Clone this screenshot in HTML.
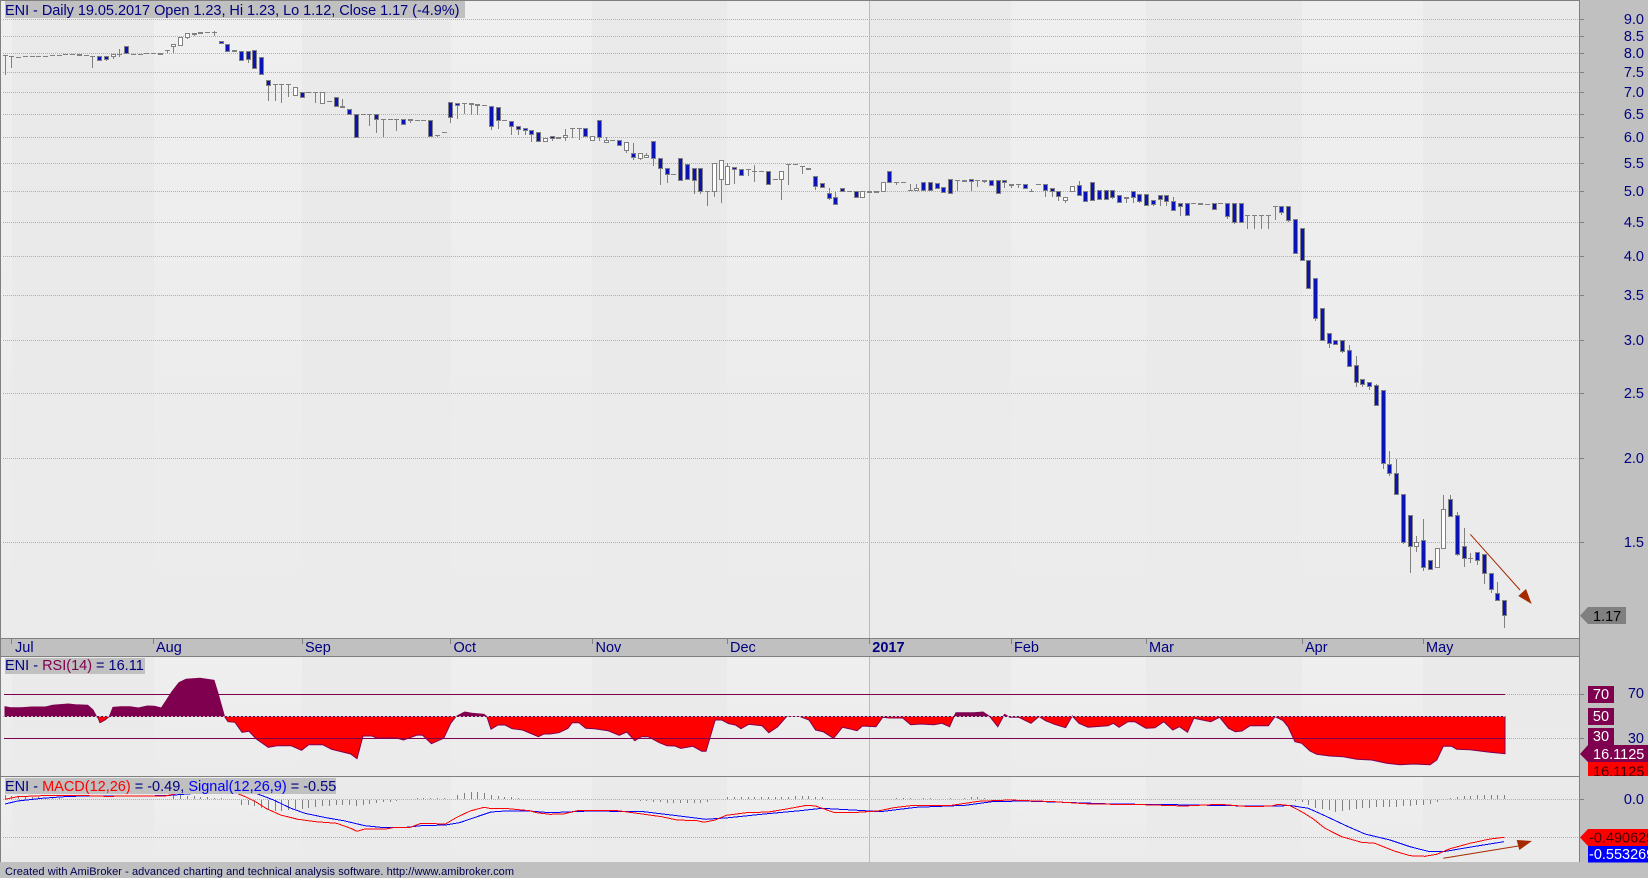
<!DOCTYPE html>
<html><head><meta charset="utf-8"><title>ENI - Daily</title>
<style>
html,body{margin:0;padding:0;background:#c0c0c0;overflow:hidden}
svg{display:block}
text{font-family:"Liberation Sans",Arial,sans-serif;font-size:14.5px;fill:#000080}
.r{text-anchor:end}
</style></head><body>
<svg xmlns="http://www.w3.org/2000/svg" width="1648" height="878" viewBox="0 0 1648 878">
<defs>
<linearGradient id="g" x1="0" y1="0" x2="0" y2="1"><stop offset="0" stop-color="#efefef"/><stop offset="1" stop-color="#ebebeb"/></linearGradient>
<linearGradient id="d" x1="0" y1="0" x2="0" y2="1"><stop offset="0" stop-color="#eaeaea"/><stop offset="1" stop-color="#ebebeb"/></linearGradient>
<clipPath id="above"><rect x="0" y="650" width="1580" height="66.5"/></clipPath>
<clipPath id="below"><rect x="0" y="716.5" width="1580" height="60"/></clipPath>
<clipPath id="redbox"><rect x="1588" y="762" width="60" height="14"/></clipPath>
<clipPath id="pane"><rect x="1" y="777" width="1578" height="85"/></clipPath>
<path id="rsi" d="M5 716.5V706.7L10.5 707.7 21 707.7 31.6 707 45.6 707 52.6 705.3 68.4 704 75.4 704.7 87.7 705.3 93 710 96.5 716.5 98 717.7 100 722.7 105 720 109.4 716.5 113 707.3 121 706.7 130 706.7 138.5 708 147.3 706 154.3 706.3 161.3 708 166.6 700 172 691.7 179 682.7 186 679.3 200 678.3 214 680.3 218 693.3 224.5 716.5 228 721.7 235 722.3 242 732.3 249 731.3 256 738.7 268.3 747.3 277 745.7 291 745.7 301.6 750.3 308.7 744.7 322.7 744.7 331.5 749.3 350.7 754 357 758.7 363 736 371.8 736 377 738 396.4 738 403.5 740 417.4 735 422.6 735.3 431.4 743.7 443.7 738.3 450.7 723.3 456 716.5 464.7 712 471.8 713.3 484 714.3 486.8 716.5 491 729.3 498 725 505 725 512 728.7 522.6 730 538.4 736.7 543.7 734 550 734 559 732.7 567.9 728.3 572.3 722.7 579 722.7 585.7 728.3 594.6 728.7 608 730.7 619.2 735.3 626.8 732 634.8 740.7 641.5 736.7 648.2 736.7 659.4 742.7 667 745.7 675 746 680.8 748.3 692.9 746.3 701.8 751.3 706 751.3 715.2 720 721.9 720 728.6 723.7 735.3 725 741 728.7 748.7 724.3 762 725.7 768.8 732.7 777.7 726.7 786.6 716.5 800 716.5 809 720 815.6 730 823.2 731.7 833.5 738.3 842.4 727.3 849 728.7 857 730.7 862.5 726 875.9 726.7 882.6 717.3 889.3 718 902.7 718 910.7 724.7 920.5 724 933.9 724.7 942 723.3 949.6 726.7 954 716.5 956 712.7 974 712.7 983 712 989.7 716.5 997.8 726.7 1004.5 714.3 1009.8 717.3 1018.8 717.3 1031 723.3 1039 716.5 1045.5 720.7 1054.5 724.3 1065.6 727.7 1072.3 716 1079 723.3 1088 727.3 1108 725.7 1113.4 723.3 1119 727.3 1128 721.7 1134.8 721.7 1146 728.3 1154.9 727.7 1163.8 721.7 1172.8 730 1179.5 726.7 1187.5 732.3 1193.8 718.3 1210.7 721.7 1219.6 717.3 1228.6 728.3 1235.3 731.7 1242 731 1250 725.7 1268.3 725.7 1275 716.5 1283 720.5 1288 726.7 1295 741.7 1301.7 743.3 1310 751 1316.7 754.3 1330 756 1343.3 756.7 1356.7 759.3 1371.7 760 1386.7 763.3 1400 764.7 1413.3 764 1430 764.7 1436.7 760 1443.3 746.3 1451.7 746.3 1456.7 749.3 1470 749.7 1490 752.3 1505 753.7V716.5Z"/>
</defs>

<!-- base -->
<rect width="1648" height="878" fill="#c0c0c0"/>

<!-- top pane bands -->
<g>
<rect x="1" y="1" width="11" height="637" fill="url(#g)"/>
<rect x="12" y="1" width="142" height="637" fill="url(#d)"/>
<rect x="154" y="1" width="148" height="637" fill="url(#g)"/>
<rect x="302" y="1" width="149" height="637" fill="url(#d)"/>
<rect x="451" y="1" width="141" height="637" fill="url(#g)"/>
<rect x="592" y="1" width="135" height="637" fill="url(#d)"/>
<rect x="727" y="1" width="142" height="637" fill="url(#g)"/>
<rect x="869" y="1" width="142" height="637" fill="url(#d)"/>
<rect x="1011" y="1" width="135" height="637" fill="url(#g)"/>
<rect x="1146" y="1" width="156" height="637" fill="url(#d)"/>
<rect x="1302" y="1" width="121" height="637" fill="url(#g)"/>
<rect x="1423" y="1" width="156" height="637" fill="url(#d)"/>
</g>
<!-- RSI pane bands -->
<g>
<rect x="1" y="657" width="11" height="119" fill="url(#g)"/>
<rect x="12" y="657" width="142" height="119" fill="url(#d)"/>
<rect x="154" y="657" width="148" height="119" fill="url(#g)"/>
<rect x="302" y="657" width="149" height="119" fill="url(#d)"/>
<rect x="451" y="657" width="141" height="119" fill="url(#g)"/>
<rect x="592" y="657" width="135" height="119" fill="url(#d)"/>
<rect x="727" y="657" width="142" height="119" fill="url(#g)"/>
<rect x="869" y="657" width="142" height="119" fill="url(#d)"/>
<rect x="1011" y="657" width="135" height="119" fill="url(#g)"/>
<rect x="1146" y="657" width="156" height="119" fill="url(#d)"/>
<rect x="1302" y="657" width="121" height="119" fill="url(#g)"/>
<rect x="1423" y="657" width="156" height="119" fill="url(#d)"/>
</g>
<!-- MACD pane bands -->
<g>
<rect x="1" y="777" width="11" height="85" fill="url(#g)"/>
<rect x="12" y="777" width="142" height="85" fill="url(#d)"/>
<rect x="154" y="777" width="148" height="85" fill="url(#g)"/>
<rect x="302" y="777" width="149" height="85" fill="url(#d)"/>
<rect x="451" y="777" width="141" height="85" fill="url(#g)"/>
<rect x="592" y="777" width="135" height="85" fill="url(#d)"/>
<rect x="727" y="777" width="142" height="85" fill="url(#g)"/>
<rect x="869" y="777" width="142" height="85" fill="url(#d)"/>
<rect x="1011" y="777" width="135" height="85" fill="url(#g)"/>
<rect x="1146" y="777" width="156" height="85" fill="url(#d)"/>
<rect x="1302" y="777" width="121" height="85" fill="url(#g)"/>
<rect x="1423" y="777" width="156" height="85" fill="url(#d)"/>
</g>

<!-- grid -->
<path fill="none" stroke="#b0b0b0" stroke-dasharray="1 1" shape-rendering="crispEdges" d="M3 19.5H1580M3 36.5H1580M3 53.5H1580M3 72.5H1580M3 92.5H1580M3 114.5H1580M3 137.5H1580M3 163.5H1580M3 191.5H1580M3 222.5H1580M3 256.5H1580M3 295.5H1580M3 340.5H1580M3 393.5H1580M3 458.5H1580M3 542.5H1580M1505 694.5H1580M1505 738.5H1580M3 799.5H1580M3 837.5H1580"/>
<path fill="none" stroke="#808080" shape-rendering="crispEdges" d="M1580 19.5h4M1580 36.5h4M1580 53.5h4M1580 72.5h4M1580 92.5h4M1580 114.5h4M1580 137.5h4M1580 163.5h4M1580 191.5h4M1580 222.5h4M1580 256.5h4M1580 295.5h4M1580 340.5h4M1580 393.5h4M1580 458.5h4M1580 542.5h4M1580 694.5h4M1580 738.5h4M1580 799.5h4"/>
<!-- year line -->
<path d="M869.5 0V862" stroke="#bbbbbb" shape-rendering="crispEdges"/>

<!-- candles -->
<path fill="none" stroke="#808080" shape-rendering="crispEdges" d="M5.5 55V75M11.5 56V68M92.5 56V68M106.5 59V61M113.5 56V59M119.5 49V57M167.5 50V53M173.5 46V53M187.5 37V39M194.5 34V36M214.5 31V36M248.5 59V63M268.5 85V101M275.5 84V101M281.5 84V103M288.5 84V97M315.5 92V103M342.5 99V108M369.5 114V126M376.5 119V133M383.5 119V137M396.5 119V131M410.5 120V123M437.5 135V137M450.5 117V123M457.5 105V119M464.5 103V114M471.5 104V115M477.5 105V115M491.5 126V130M498.5 120V129M511.5 126V135M518.5 129V135M525.5 130V135M531.5 134V142M552.5 138V141M565.5 129V141M572.5 128V138M579.5 128V140M599.5 137V141M606.5 137V141M626.5 150V153M633.5 143V160M640.5 158V160M646.5 153V156M653.5 158V166M660.5 168V185M667.5 174V183M694.5 180V194M700.5 191V194M707.5 191V206M714.5 191V197M721.5 179V203M727.5 163V167M734.5 169V184M748.5 169V176M754.5 165V182M781.5 179V200M788.5 164V185M802.5 166V174M815.5 186V190M822.5 187V188M829.5 188V200M835.5 192V198M896.5 182V185M910.5 184V191M916.5 184V189M957.5 180V191M971.5 181V191M977.5 180V187M984.5 181V183M1004.5 182V188M1011.5 185V188M1018.5 184V188M1031.5 189V192M1045.5 190V197M1052.5 191V197M1058.5 196V201M1065.5 200V203M1079.5 181V186M1112.5 197V199M1126.5 198V203M1133.5 197V203M1139.5 201V203M1153.5 204V206M1160.5 199V206M1166.5 201V206M1173.5 197V202M1180.5 206V216M1227.5 216V219M1234.5 222V224M1241.5 222V223M1247.5 215V229M1254.5 215V229M1261.5 215V229M1268.5 215V229M1275.5 206V220M1281.5 212V215M1288.5 220V222M1315.5 318V321M1329.5 343V348M1342.5 351V353M1349.5 345V351M1356.5 356V387M1362.5 384V387M1369.5 386V390M1376.5 384V386M1383.5 463V469M1389.5 451V476M1396.5 459V474M1403.5 542V544M1410.5 546V573M1416.5 536V552M1423.5 519V571M1437.5 567V568M1443.5 495V510M1450.5 495V500M1457.5 512V556M1464.5 528V567M1470.5 553V563M1477.5 560V565M1484.5 573V584M1491.5 589V593M1497.5 582V594M1504.5 615V628M3 55.5h5M9 56.5h5M16 57.5h5M23 56.5h5M30 56.5h5M36 56.5h5M43 56.5h5M50 55.5h5M57 55.5h5M63 54.5h5M70 54.5h5M84 55.5h5M90 56.5h5M117 54.5h5M131 54.5h5M138 54.5h5M144 53.5h5M151 53.5h5M165 50.5h5M205 32.5h5M212 32.5h5M273 84.5h5M279 84.5h5M286 84.5h5M306 92.5h5M313 92.5h5M327 101.5h5M361 114.5h5M367 114.5h5M381 119.5h5M388 119.5h5M394 119.5h5M415 120.5h5M421 120.5h5M435 135.5h5M442 132.5h5M462 103.5h5M482 105.5h5M502 120.5h5M570 128.5h5M577 128.5h5M610 140.5h5M671 174.5h5M705 191.5h5M746 169.5h5M752 171.5h5M759 171.5h5M773 179.5h5M786 164.5h5M793 164.5h5M800 166.5h5M847 191.5h5M894 182.5h5M901 182.5h5M908 190.5h5M955 180.5h5M975 180.5h5M1016 184.5h5M1029 191.5h5M1036 184.5h5M1191 203.5h5M1205 204.5h5M1218 203.5h5M1245 215.5h5M1252 215.5h5M1259 215.5h5M1266 215.5h5M1273 206.5h5M1468 558.5h5"/>
<path fill="#808080" shape-rendering="crispEdges" d="M77 54h5v2h-5zM158 53h5v2h-5zM192 33h5v2h-5zM198 32h5v2h-5zM232 50h5v2h-5zM340 106h5v2h-5zM408 119h5v2h-5zM469 103h5v2h-5zM475 104h5v2h-5zM556 137h5v2h-5zM806 168h5v2h-5zM867 191h5v2h-5zM874 191h5v2h-5zM962 180h5v2h-5zM982 180h5v2h-5zM1009 184h5v2h-5zM1124 197h5v2h-5zM1198 203h5v2h-5z"/>
<path fill="#0a14b4" stroke="#808080" shape-rendering="crispEdges" d="M97.5 56.5h4v4h-4zM104.5 56.5h4v3h-4zM124.5 46.5h4v7h-4zM219.5 41.5h4v2h-4zM225.5 44.5h4v7h-4zM239.5 51.5h4v9h-4zM246.5 51.5h4v8h-4zM252.5 50.5h4v18h-4zM259.5 57.5h4v17h-4zM266.5 80.5h4v5h-4zM300.5 92.5h4v5h-4zM334.5 97.5h4v9h-4zM347.5 109.5h4v5h-4zM354.5 114.5h4v23h-4zM374.5 114.5h4v5h-4zM401.5 119.5h4v5h-4zM428.5 120.5h4v16h-4zM448.5 102.5h4v15h-4zM455.5 103.5h4v2h-4zM489.5 106.5h4v20h-4zM496.5 107.5h4v13h-4zM509.5 121.5h4v5h-4zM516.5 126.5h4v3h-4zM523.5 128.5h4v2h-4zM529.5 130.5h4v4h-4zM536.5 132.5h4v9h-4zM550.5 136.5h4v2h-4zM583.5 128.5h4v8h-4zM597.5 120.5h4v17h-4zM617.5 140.5h4v5h-4zM631.5 153.5h4v4h-4zM651.5 141.5h4v17h-4zM658.5 158.5h4v10h-4zM665.5 168.5h4v6h-4zM678.5 158.5h4v22h-4zM685.5 164.5h4v15h-4zM692.5 168.5h4v12h-4zM698.5 168.5h4v23h-4zM732.5 167.5h4v2h-4zM739.5 169.5h4v6h-4zM766.5 171.5h4v13h-4zM813.5 176.5h4v10h-4zM820.5 183.5h4v4h-4zM827.5 193.5h4v5h-4zM833.5 197.5h4v7h-4zM840.5 188.5h4v3h-4zM854.5 191.5h4v6h-4zM887.5 171.5h4v11h-4zM921.5 182.5h4v8h-4zM928.5 182.5h4v8h-4zM935.5 183.5h4v5h-4zM941.5 187.5h4v5h-4zM948.5 179.5h4v14h-4zM969.5 179.5h4v2h-4zM989.5 180.5h4v5h-4zM996.5 180.5h4v13h-4zM1002.5 180.5h4v2h-4zM1023.5 184.5h4v4h-4zM1043.5 184.5h4v6h-4zM1050.5 188.5h4v3h-4zM1056.5 191.5h4v5h-4zM1077.5 185.5h4v10h-4zM1083.5 191.5h4v10h-4zM1090.5 182.5h4v18h-4zM1097.5 190.5h4v9h-4zM1104.5 190.5h4v9h-4zM1110.5 190.5h4v7h-4zM1117.5 195.5h4v7h-4zM1131.5 191.5h4v6h-4zM1137.5 194.5h4v7h-4zM1144.5 194.5h4v11h-4zM1151.5 200.5h4v4h-4zM1158.5 195.5h4v4h-4zM1164.5 195.5h4v6h-4zM1171.5 201.5h4v9h-4zM1178.5 203.5h4v3h-4zM1185.5 203.5h4v12h-4zM1212.5 203.5h4v6h-4zM1225.5 203.5h4v13h-4zM1232.5 203.5h4v19h-4zM1239.5 203.5h4v19h-4zM1279.5 206.5h4v6h-4zM1286.5 206.5h4v14h-4zM1293.5 219.5h4v34h-4zM1300.5 228.5h4v32h-4zM1306.5 260.5h4v28h-4zM1313.5 278.5h4v40h-4zM1320.5 308.5h4v32h-4zM1327.5 333.5h4v10h-4zM1333.5 340.5h4v4h-4zM1340.5 340.5h4v11h-4zM1347.5 350.5h4v16h-4zM1354.5 365.5h4v17h-4zM1360.5 379.5h4v5h-4zM1367.5 382.5h4v4h-4zM1374.5 385.5h4v20h-4zM1381.5 390.5h4v73h-4zM1387.5 464.5h4v9h-4zM1394.5 473.5h4v21h-4zM1401.5 494.5h4v48h-4zM1408.5 515.5h4v31h-4zM1421.5 540.5h4v27h-4zM1428.5 560.5h4v9h-4zM1448.5 499.5h4v17h-4zM1455.5 515.5h4v39h-4zM1462.5 546.5h4v12h-4zM1475.5 552.5h4v8h-4zM1482.5 554.5h4v19h-4zM1489.5 573.5h4v16h-4zM1495.5 593.5h4v7h-4zM1502.5 600.5h4v15h-4z"/>
<path fill="#ffffff" stroke="#808080" shape-rendering="crispEdges" d="M111.5 54.5h4v2h-4zM171.5 44.5h4v2h-4zM178.5 37.5h4v8h-4zM185.5 33.5h4v4h-4zM293.5 87.5h4v8h-4zM320.5 92.5h4v11h-4zM543.5 138.5h4v3h-4zM563.5 135.5h4v2h-4zM590.5 136.5h4v4h-4zM604.5 140.5h4v2h-4zM624.5 142.5h4v8h-4zM638.5 153.5h4v5h-4zM644.5 155.5h4v2h-4zM712.5 163.5h4v28h-4zM719.5 160.5h4v19h-4zM725.5 166.5h4v18h-4zM779.5 171.5h4v8h-4zM860.5 191.5h4v6h-4zM881.5 182.5h4v9h-4zM914.5 188.5h4v2h-4zM1063.5 197.5h4v3h-4zM1070.5 186.5h4v5h-4zM1414.5 542.5h4v4h-4zM1435.5 548.5h4v19h-4zM1441.5 509.5h4v39h-4z"/>

<!-- price arrow -->
<path d="M1470.3 534.3L1520 590" stroke="#a52a00" fill="none"/>
<path d="M1531.7 604L1518.3 596 1526 589Z" fill="#a52a00"/>

<!-- RSI -->
<use href="#rsi" fill="#800050" clip-path="url(#above)"/>
<use href="#rsi" fill="#ff0000" clip-path="url(#below)"/>
<use href="#rsi" fill="none" stroke="#800050" stroke-width="1"/>
<path d="M3 716.5H1505" stroke="#b4b4b4" stroke-dasharray="2 2" shape-rendering="crispEdges"/>
<path d="M4 694.5H1505M4 738.5H1505" stroke="#800050" shape-rendering="crispEdges"/>

<!-- MACD histogram -->
<path fill="none" stroke="#808080" shape-rendering="crispEdges" d="M5.5 799V795M11.5 799V796M18.5 799V796M25.5 799V796M32.5 799V797M38.5 799V797M45.5 799V798M52.5 799V798M59.5 799V798M173.5 799V795M180.5 799V795M187.5 799V796M194.5 799V796M200.5 799V797M207.5 799V797M214.5 799V798M221.5 799V798M241.5 800V805M248.5 800V805M254.5 800V806M261.5 800V808M268.5 800V810M275.5 800V811M281.5 800V811M288.5 800V810M295.5 800V809M302.5 800V809M308.5 800V808M315.5 800V807M322.5 800V806M329.5 800V806M336.5 800V805M342.5 800V805M349.5 800V805M356.5 800V806M363.5 800V805M369.5 800V804M376.5 800V803M383.5 800V802M390.5 800V802M396.5 800V801M417.5 799V798M423.5 799V798M430.5 799V798M437.5 799V798M444.5 799V798M457.5 799V795M464.5 799V793M471.5 799V792M477.5 799V792M484.5 799V793M491.5 799V795M498.5 799V796M504.5 799V797M511.5 799V797M518.5 799V798M640.5 800V801M646.5 800V801M653.5 800V802M660.5 800V802M667.5 800V803M673.5 800V803M680.5 800V803M687.5 800V803M694.5 800V803M700.5 800V803M707.5 800V802M727.5 799V797M734.5 799V797M741.5 799V797M748.5 799V797M754.5 799V797M761.5 799V797M768.5 799V797M775.5 799V797M781.5 799V797M788.5 799V797M795.5 799V796M802.5 799V796M808.5 799V796M815.5 799V797M822.5 799V797M896.5 799V798M903.5 799V798M910.5 799V798M923.5 799V798M930.5 799V798M950.5 799V798M964.5 799V798M971.5 799V797M977.5 799V797M984.5 799V798M1295.5 800V801M1302.5 800V802M1308.5 800V805M1315.5 800V808M1322.5 800V809M1329.5 800V810M1335.5 800V812M1342.5 800V811M1349.5 800V810M1356.5 800V809M1362.5 800V808M1369.5 800V808M1376.5 800V807M1383.5 800V807M1389.5 800V807M1396.5 800V807M1403.5 800V806M1410.5 800V806M1416.5 800V805M1423.5 800V805M1430.5 800V804M1437.5 800V802M1450.5 799V798M1457.5 799V797M1464.5 799V796M1470.5 799V796M1477.5 799V795M1484.5 799V795M1491.5 799V795M1497.5 799V795M1504.5 799V795"/>

<!-- MACD lines -->
<g clip-path="url(#pane)" fill="none" shape-rendering="crispEdges" stroke-width="1">
<polyline stroke="#0000ff" points="5,804 17.5,801 42,798.3 70,796.3 108.7,796 165,795.7 191,793.7 205,788 225,786 240,788 257.8,794 273.6,800 291,808.3 305,813.3 326,817.7 343.7,820.7 364.8,825.7 380.6,827.3 406.9,827.3 420.9,825.7 445.5,825 459.5,822.7 477,816.7 491,812 505,811 529.6,811 550,812.7 590,811 643.8,811.7 679.5,816 706,819.3 728.6,817.7 764.3,814 800,810.7 822,808.3 858,810.3 880.4,811.7 916,807.3 965.2,805.3 992,801.7 1023,801 1063.4,802.3 1112.5,804 1175,804.7 1250,806 1291.7,805.7 1308.3,808.3 1323.3,815 1346.7,826 1365,834 1390,840 1410,846.7 1428.3,851.3 1443.3,851.7 1463.3,848.3 1483.3,845 1504,841.7"/>
<polyline stroke="#ff0000" points="5,799.3 17.5,796.7 42,795.7 87.7,795.7 105,796.3 165,796 175,794 195,784 215,782 230,788 238.5,794 245.5,796.7 256,802 266.6,808.7 280.6,815 298,819.3 315.7,821.7 336.7,823.3 350.7,828.3 357,831.3 364.8,829 385.8,829 392.8,827.7 410.4,827.3 420.9,823.3 445.5,824 456,817.7 470,811 484,807.3 489.3,808.3 508.6,808.7 529.6,810.7 536.6,812.7 550,814.3 563.4,814 579,810.3 614.7,810.3 637,813.3 661.6,816.7 677,820 697.3,820.7 704,822.3 715.2,820 726.3,815.3 746.4,812.7 768.8,812 786.6,809 806.7,805.3 815.6,806 833.5,812.3 858,812.3 878,811 893.8,807.7 913.8,805.3 951.8,805.3 978.6,801.3 1009.8,800 1054.5,801.7 1090.2,804 1143.8,804.7 1184,806 1219.6,804.3 1250,806.7 1271.7,806 1278.3,804.3 1290,805.7 1301.7,811.7 1313.3,819 1325,828.3 1341.7,836.7 1361.7,842.3 1375,843.3 1393.3,850.7 1410,855.7 1425,856.3 1436.7,854.3 1450,848.7 1470,843.3 1490,839 1504.3,837.3"/>
</g>
<!-- MACD arrow -->
<path d="M1443.3 858.3L1518.3 846" stroke="#a52a00" fill="none"/>
<path d="M1532 841L1516.7 840 1519.3 850Z" fill="#a52a00"/>

<!-- frames -->
<rect x="0" y="0" width="1" height="862" fill="#808080"/>
<rect x="0" y="0" width="1580" height="1" fill="#808080"/>
<rect x="1579" y="0" width="1" height="862" fill="#808080"/>
<rect x="1" y="638" width="1578" height="19" fill="#c0c0c0"/>
<rect x="0" y="638" width="1580" height="1" fill="#808080"/>
<rect x="0" y="656" width="1580" height="1" fill="#808080"/>
<rect x="0" y="776" width="1580" height="1" fill="#808080"/>
<rect x="0" y="862" width="1580" height="16" fill="#c0c0c0"/>

<!-- x axis ticks and labels -->
<path stroke="#808080" shape-rendering="crispEdges" d="M11.5 639v5M153.5 639v5M302.5 639v5M450.5 639v5M592.5 639v5M727.5 639v5M869.5 639v5M1011.5 639v5M1146.5 639v5M1302.5 639v5M1423.5 639v5"/>
<text x="15" y="652">Jul</text>
<text x="156" y="652">Aug</text>
<text x="305" y="652">Sep</text>
<text x="453.5" y="652">Oct</text>
<text x="595.5" y="652">Nov</text>
<text x="730" y="652">Dec</text>
<text x="872.3" y="652" style="font-weight:bold">2017</text>
<text x="1014" y="652">Feb</text>
<text x="1149" y="652">Mar</text>
<text x="1305" y="652">Apr</text>
<text x="1426" y="652">May</text>

<!-- top title -->
<rect x="5" y="1" width="460" height="17" fill="#c0c0c0"/>
<text x="5" y="15" textLength="454.5">ENI - Daily 19.05.2017 Open 1.23, Hi 1.23, Lo 1.12, Close 1.17 (-4.9%)</text>

<!-- RSI label -->
<rect x="5" y="658" width="140" height="16" fill="#c0c0c0"/>
<text x="5" y="670">ENI - <tspan style="fill:#800050">RSI(14)</tspan> = 16.11</text>

<!-- MACD label -->
<rect x="5" y="778" width="331" height="16" fill="#c0c0c0"/>
<text x="5" y="791">ENI - <tspan style="fill:#ff0000">MACD(12,26)</tspan> = -0.49, <tspan style="fill:#0000ff">Signal(12,26,9)</tspan> = -0.55</text>

<!-- footer -->
<text x="5" y="875" textLength="509" style="font-size:11px;fill:#000050">Created with AmiBroker - advanced charting and technical analysis software. http://www.amibroker.com</text>

<!-- y axis labels -->
<g>
<text class="r" x="1644" y="24">9.0</text>
<text class="r" x="1644" y="41">8.5</text>
<text class="r" x="1644" y="58">8.0</text>
<text class="r" x="1644" y="77">7.5</text>
<text class="r" x="1644" y="97">7.0</text>
<text class="r" x="1644" y="119">6.5</text>
<text class="r" x="1644" y="142">6.0</text>
<text class="r" x="1644" y="168">5.5</text>
<text class="r" x="1644" y="196">5.0</text>
<text class="r" x="1644" y="227">4.5</text>
<text class="r" x="1644" y="261">4.0</text>
<text class="r" x="1644" y="300">3.5</text>
<text class="r" x="1644" y="345">3.0</text>
<text class="r" x="1644" y="398">2.5</text>
<text class="r" x="1644" y="463">2.0</text>
<text class="r" x="1644" y="547">1.5</text>
<text class="r" x="1644" y="698">70</text>
<text class="r" x="1644" y="743">30</text>
<text class="r" x="1644" y="804">0.0</text>
</g>

<!-- last price tag -->
<path d="M1580 615.7L1588 607H1626V624H1588Z" fill="#808080"/>
<text x="1593" y="621" style="fill:#000">1.17</text>

<!-- RSI tags -->
<rect x="1588" y="686" width="26" height="17" fill="#800050"/>
<text x="1601" y="699" text-anchor="middle" style="fill:#fff">70</text>
<rect x="1588" y="708" width="26" height="17" fill="#800050"/>
<text x="1601" y="721" text-anchor="middle" style="fill:#fff">50</text>
<rect x="1588" y="728" width="26" height="17" fill="#800050"/>
<text x="1601" y="741" text-anchor="middle" style="fill:#fff">30</text>
<rect x="1588" y="762" width="60" height="14" fill="#ff0000"/>
<text x="1593" y="776.5" clip-path="url(#redbox)" style="fill:#400000">16.1125</text>
<path d="M1580 754L1588 745H1648V762H1588Z" fill="#800050"/>
<text x="1593" y="759" style="fill:#fff">16.1125</text>

<!-- MACD tags -->
<path d="M1580 837.5L1588 829H1648V846H1588Z" fill="#ff0000"/>
<text x="1589" y="842.5" style="fill:#400000">-0.490629</text>
<rect x="1588" y="846" width="60" height="16.5" fill="#0000ff"/>
<text x="1589" y="859" style="fill:#fff">-0.553269</text>
</svg>
</body></html>
